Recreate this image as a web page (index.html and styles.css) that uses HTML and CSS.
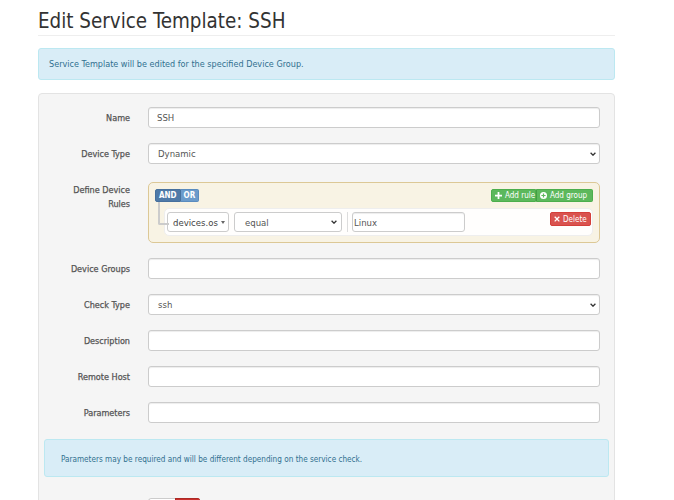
FILE: index.html
```html
<!DOCTYPE html>
<html lang="en">
<head>
<meta charset="utf-8">
<title>Edit Service Template: SSH</title>
<link rel="stylesheet" href="styles.css">
</head>
<body>
<div class="page">
  <h1 class="page-title">Edit Service Template: SSH</h1>
  <div class="alert alert-top">Service Template will be edited for the specified Device Group.</div>

  <form class="well">
    <div class="form-row">
      <label class="form-label">Name</label>
      <input class="form-control" type="text" value="SSH">
    </div>

    <div class="form-row">
      <label class="form-label">Device Type</label>
      <div class="form-control select">
        <span>Dynamic</span>
        <svg class="chev" viewBox="0 0 6 4"><path d="M0.6 0.8L3 3.2L5.4 0.8"/></svg>
      </div>
    </div>

    <div class="form-row rules-row">
      <label class="form-label multi">Define Device<br>Rules</label>
      <div class="rules-group">
        <div class="group-header">
          <div class="btn-group">
            <span class="btn btn-and">AND</span><span class="btn btn-or">OR</span>
          </div>
          <div class="btn-group">
            <span class="btn btn-success btn-rule"><svg class="ico" viewBox="0 0 8 8"><path d="M3 0h2v3h3v2H5v3H3V5H0V3h3z"/></svg>Add rule</span><span class="btn btn-success btn-grp"><svg class="ico" viewBox="0 0 8 8"><circle cx="4" cy="4" r="4" fill="#fff"/><path d="M3.3 1.6h1.4v1.7h1.7v1.4H4.7v1.7H3.3V4.7H1.6V3.3h1.7z" fill="#5cb85c"/></svg>Add group</span>
          </div>
        </div>
        <div class="rule">
          <div class="rule-filter"><span>devices.os</span><span class="caret"></span></div>
          <div class="rule-operator">
            <span>equal</span>
            <svg class="chev" viewBox="0 0 6 4"><path d="M0.6 0.8L3 3.2L5.4 0.8"/></svg>
          </div>
          <div class="rule-divider"></div>
          <input class="rule-value" type="text" value="Linux">
          <span class="btn btn-danger"><svg class="ico ico-x" viewBox="0 0 8 8"><path d="M1.5 0.3L4 2.8L6.5 0.3L7.7 1.5L5.2 4L7.7 6.5L6.5 7.7L4 5.2L1.5 7.7L0.3 6.5L2.8 4L0.3 1.5z"/></svg>Delete</span>
        </div>
      </div>
    </div>

    <div class="form-row">
      <label class="form-label">Device Groups</label>
      <input class="form-control" type="text" value="">
    </div>

    <div class="form-row">
      <label class="form-label">Check Type</label>
      <div class="form-control select">
        <span>ssh</span>
        <svg class="chev" viewBox="0 0 6 4"><path d="M0.6 0.8L3 3.2L5.4 0.8"/></svg>
      </div>
    </div>

    <div class="form-row">
      <label class="form-label">Description</label>
      <input class="form-control" type="text" value="">
    </div>

    <div class="form-row">
      <label class="form-label">Remote Host</label>
      <input class="form-control" type="text" value="">
    </div>

    <div class="form-row">
      <label class="form-label">Parameters</label>
      <input class="form-control" type="text" value="">
    </div>

    <div class="alert alert-params">Parameters may be required and will be different depending on the service check.</div>

    <div class="form-row toggle-row">
      <label class="form-label"></label>
      <div class="toggle"><span class="toggle-on"></span><span class="toggle-off"></span></div>
    </div>
  </form>
</div>
</body>
</html>
```

FILE: styles.css
```css
* { box-sizing: border-box; }
html { overflow: hidden; }
body {
  margin: 0;
  background: #fff;
  color: #333;
  font-family: "DejaVu Sans Condensed", "DejaVu Sans", Verdana, sans-serif;
}
.page { margin-left: 38px; width: 577px; }

.page-title {
  margin: 9px 0 0;
  padding-bottom: 2px;
  border-bottom: 1px solid #eee;
  font-size: 20.4px;
  line-height: 24px;
  font-weight: normal;
  color: #333;
}

.alert {
  border: 1px solid #bce8f1;
  background: #d9edf7;
  color: #31708f;
  border-radius: 3px;
  font-size: 9px;
  line-height: 12px;
}
.alert-top { margin-top: 12px; padding: 9px 10px; }
.alert-params { margin: 16px -9px 0 5px; padding: 13px 16px 11px; font-size: 8.15px; }

.well {
  margin: 13px 0 0;
  padding: 13px 14px 40px 0;
  background: #f5f5f5;
  border: 1px solid #e3e3e3;
  border-radius: 4px;
}

.form-row { display: flex; align-items: center; gap: 18px; margin-bottom: 15px; }
.form-label {
  flex: 0 0 91px;
  text-align: right;
  font-size: 9px;
  font-weight: normal;
  color: #555;
  -webkit-text-stroke: 0.25px #555;
  line-height: 14px;
}
.form-label.multi { padding-top: 1px; }
.form-control {
  flex: 1;
  height: 21px;
  border: 1px solid #ccc;
  border-radius: 3px;
  background: #fff;
  box-shadow: inset 0 1px 1px rgba(0,0,0,.075);
  font: 9.5px "DejaVu Sans Condensed", "DejaVu Sans", sans-serif;
  color: #555;
  padding: 0 8px;
  outline: none;
}
.select {
  display: flex;
  align-items: center;
  justify-content: space-between;
  padding: 0 2px 0 9px;
}
.chev { width: 6px; height: 4px; fill: none; stroke: #333; stroke-width: 1.3; }
.select .chev { margin-right: 1px; }

.rules-row { align-items: flex-start; margin-top: 18px; }
.rules-group {
  flex: 1;
  border: 1px solid #dcc896;
  border-radius: 5px;
  background: #f8f3e4;
  padding: 6px;
}
.group-header { display: flex; justify-content: space-between; height: 13px; }
.btn-group { display: flex; }
.btn {
  display: inline-flex;
  align-items: center;
  height: 13px;
  padding: 0 3px;
  font-size: 8px;
  color: #fff;
  border: 1px solid transparent;
  white-space: nowrap;
}
.btn-and { background: #4f7aa8; border-color: #46709d; font-weight: bold; border-radius: 2px 0 0 2px; }
.btn-or { background: #6b9bcb; border-color: #5a8cbf; font-weight: bold; border-radius: 0 2px 2px 0; border-left: 0; }
.btn-success { background: #5cb85c; border-color: #4cae4c; }
.btn-rule { border-radius: 2px 0 0 2px; width: 45px; }
.btn-grp { border-radius: 0 2px 2px 0; width: 57px; border-left-color: #449d44; }
.ico { width: 7px; height: 7px; fill: #fff; margin-right: 3px; flex: none; }

.rule {
  position: relative;
  display: flex;
  align-items: flex-start;
  height: 28px;
  margin: 6px 0 0 9px;
  padding: 3px 1px 3px 2px;
  border: 1px solid #eee;
  border-radius: 5px;
  background: rgba(255,255,255,.92);
}
.rule::before {
  content: "";
  position: absolute;
  left: -7px;
  top: -7px;
  width: 9px;
  height: 21px;
  border-left: 2px solid #ccc;
  border-bottom: 2px solid #ccc;
  border-bottom-left-radius: 2px;
}
.rule-filter, .rule-operator, .rule-value {
  height: 20px;
  border: 1px solid #ccc;
  border-radius: 3px;
  background: #fff;
  font: 9.5px "DejaVu Sans Condensed", "DejaVu Sans", sans-serif;
  color: #555;
  display: flex;
  align-items: center;
}
.rule-filter { width: 62px; padding-left: 5px; gap: 3px; color: #444; }
.caret {
  width: 0; height: 0;
  border-left: 2.5px solid transparent;
  border-right: 2.5px solid transparent;
  border-top: 3px solid #666;
}
.rule-operator { width: 108px; margin-left: 5px; padding: 0 4px 0 10px; justify-content: space-between; }
.rule-divider { width: 1px; height: 20px; background: #ddd; margin-left: 5px; }
.rule-value { width: 113px; margin-left: 4px; padding: 0 1px; outline: none; box-shadow: inset 0 1px 1px rgba(0,0,0,.075); }
.btn-danger {
  margin-left: auto;
  height: 14px;
  width: 41px;
  background: #d9534f;
  border-color: #d43f3a;
  border-radius: 2px;
  padding: 0 3px;
}
.ico-x { width: 6px; height: 6px; }

.toggle-row { margin-top: 21px; }
.toggle { display: flex; width: 52px; height: 22px; border-radius: 3px; overflow: hidden; }
.toggle-on { flex: 0 0 27px; background: #fff; border: 1px solid #ccc; border-right: 0; border-radius: 3px 0 0 3px; }
.toggle-off { flex: 1; background: #c9302c; border: 1px solid #ac2925; }
```
